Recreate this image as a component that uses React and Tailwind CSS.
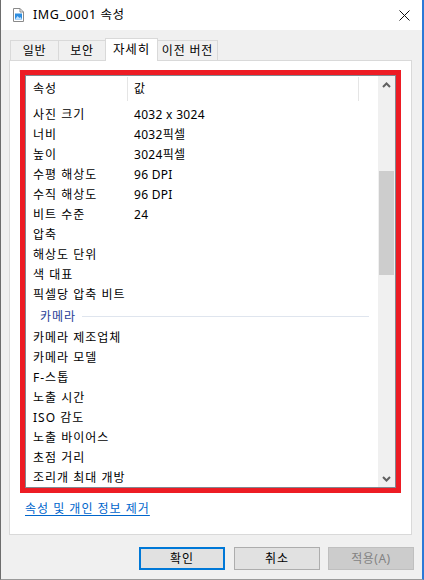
import React from "react";

const props = [
  ["사진 크기", "4032 x 3024"],
  ["너비", "4032픽셀"],
  ["높이", "3024픽셀"],
  ["수평 해상도", "96 DPI"],
  ["수직 해상도", "96 DPI"],
  ["비트 수준", "24"],
  ["압축", ""],
  ["해상도 단위", ""],
  ["색 대표", ""],
  ["픽셀당 압축 비트", ""],
];

const camera = [
  "카메라 제조업체",
  "카메라 모델",
  "F-스톱",
  "노출 시간",
  "ISO 감도",
  "노출 바이어스",
  "초점 거리",
  "조리개 최대 개방",
];

const tabs = [
  { label: "일반", w: "w-[49px]" },
  { label: "보안", w: "w-[48px]" },
  { label: "자세히", w: "w-[53px]", active: true },
  { label: "이전 버전", w: "w-[61px]" },
];

const FileIcon = () => (
  <svg width="11" height="14" viewBox="0 0 11 14">
    <path d="M0.5 0.5 H7 L10.5 4 V13.5 H0.5 Z" fill="#fff" stroke="#8a8a8a" />
    <path d="M7 0.5 V4 H10.5" fill="none" stroke="#8a8a8a" />
    <rect x="2" y="5.5" width="7" height="6" fill="#2f8ee0" />
    <path d="M2 11.5 L4.5 8 L6.5 10 L7.5 9 L9 11.5 Z" fill="#bfe1ff" />
  </svg>
);

const Row = ({ name, value }) => (
  <div className="flex h-[20px] items-center">
    <div className="w-[102px] pl-[7px] whitespace-nowrap tracking-[1px]">{name}</div>
    <div className="pl-[6px] whitespace-nowrap tracking-[0.3px]">{value}</div>
  </div>
);

export default function App() {
  return (
    <div
      className="w-[424px] h-[580px] flex flex-col bg-[#f0f0f0] border-l border-l-[#6d6d6d] border-r-2 border-r-[#2b79d7] border-b border-b-[#9a9a9a] text-[12px] text-black overflow-hidden"
      style={{ fontFamily: '"Noto Sans", "Noto Sans CJK KR", sans-serif' }}
    >
      {/* title bar */}
      <div className="h-[30px] shrink-0 bg-white flex items-center pl-[12px]">
        <FileIcon />
        <span className="ml-[9px] text-[12.5px] tracking-[0.6px]">IMG_0001 속성</span>
        <svg className="ml-auto mr-[12px]" width="11" height="11" viewBox="0 0 11 11">
          <path d="M0.5 0.5 L10.5 10.5 M10.5 0.5 L0.5 10.5" stroke="#111" strokeWidth="1" />
        </svg>
      </div>

      {/* tabs */}
      <div className="h-[30px] shrink-0 flex items-end pl-[9px]">
        {tabs.map((t) => (
          <div
            key={t.label}
            className={
              t.active
                ? `${t.w} h-[23px] -mb-px -ml-px bg-white border border-[#d9d9d9] border-b-0 flex items-center justify-center z-10 text-[12.5px] tracking-[0.8px]`
                : `${t.w} h-[20px] -ml-px first:ml-0 bg-[#f0f0f0] border border-[#d9d9d9] border-b-0 flex items-center justify-center tracking-[0.8px]`
            }
          >
            {t.label}
          </div>
        ))}
      </div>

      {/* panel */}
      <div className="ml-[8px] w-[403px] h-[475px] shrink-0 bg-white border border-[#d9d9d9] flex flex-col">
        <div className="ml-[10px] mt-[9px] w-[381px] h-[423px] border-[5px] border-[#ed1c24]">
          <div className="w-full h-full border border-[#828790] flex overflow-hidden">
            <div className="flex-1 flex flex-col overflow-hidden">
              <div className="h-[25px] shrink-0 flex items-center pt-px">
                <div className="w-[102px] pl-[7px] h-full flex items-center border-r border-[#e5e5e5] tracking-[1px]">속성</div>
                <div className="w-[231px] pl-[6px] h-full flex items-center border-r border-[#e5e5e5]">값</div>
              </div>
              <div className="pt-[4px]">
                {props.map(([n, v]) => (
                  <Row key={n} name={n} value={v} />
                ))}
                <div className="h-[23px] flex items-center pl-[14px]">
                  <span className="text-[#1e3c96] tracking-[1px]">카메라</span>
                  <div className="flex-1 ml-[6px] mr-[9px] h-px bg-[#dfe5ee]" />
                </div>
                {camera.map((n) => (
                  <Row key={n} name={n} value="" />
                ))}
              </div>
            </div>
            {/* scrollbar */}
            <div className="w-[17px] shrink-0 bg-[#f0f0f0] flex flex-col">
              <div className="h-[17px] flex items-center justify-center">
                <svg width="9" height="6" viewBox="0 0 9 6">
                  <path d="M1 5 L4.5 1.5 L8 5" fill="none" stroke="#606060" strokeWidth="2" />
                </svg>
              </div>
              <div className="mt-[78px] ml-px w-[15px] h-[104px] bg-[#cdcdcd]" />
              <div className="mt-auto h-[17px] flex items-center justify-center">
                <svg width="9" height="6" viewBox="0 0 9 6">
                  <path d="M1 1 L4.5 4.5 L8 1" fill="none" stroke="#606060" strokeWidth="2" />
                </svg>
              </div>
            </div>
          </div>
        </div>
        <a className="ml-[15px] mt-[7px] w-fit text-[#0066cc] underline underline-offset-2 cursor-pointer tracking-[1px]">
          속성 및 개인 정보 제거
        </a>
      </div>

      {/* buttons */}
      <div className="mt-[12px] flex justify-end pr-[8px]">
        <button className="w-[86px] h-[23px] bg-[#e1e1e1] border-2 border-[#0078d7] tracking-[1px]">확인</button>
        <button className="ml-[9px] w-[86px] h-[23px] bg-[#e1e1e1] border border-[#adadad] tracking-[1px]">취소</button>
        <button className="ml-[8px] w-[86px] h-[23px] bg-[#cccccc] border border-[#bfbfbf] text-[#838383] tracking-[0.5px]">적용(A)</button>
      </div>
    </div>
  );
}
